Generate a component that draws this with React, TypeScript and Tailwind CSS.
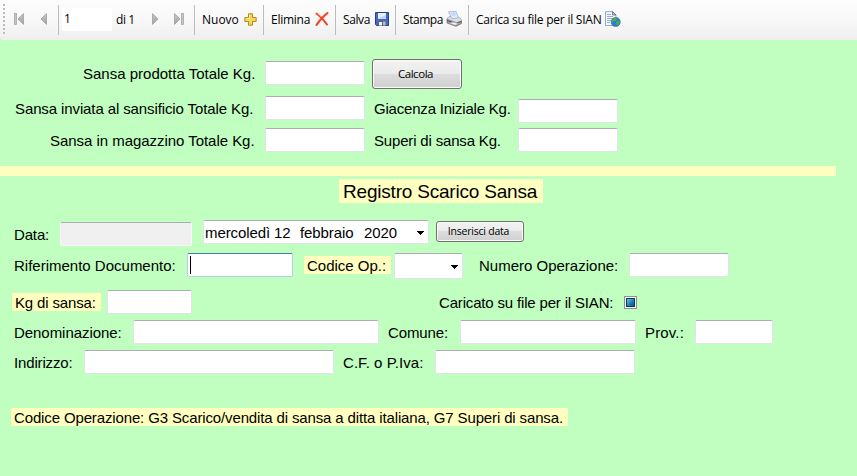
import type { ReactNode } from "react";

function Field({ className = "" }: { className?: string }) {
  return (
    <div className={`h-6 shrink-0 rounded-[2px] border border-[#e2e3ea] border-t-[#abadb3] bg-white ${className}`} />
  );
}

function Label({ className = "", children }: { className?: string; children: ReactNode }) {
  return (
    <span className={`h-[17px] shrink-0 whitespace-pre text-[15px] leading-[17px] text-black ${className}`}>
      {children}
    </span>
  );
}

function Row({ className = "", children }: { className?: string; children: ReactNode }) {
  return <div className={`flex shrink-0 items-start ${className}`}>{children}</div>;
}

function Separator({ className = "" }: { className?: string }) {
  return <div className={`mt-[5px] h-[30px] w-px shrink-0 bg-[#bdbdbd] ${className}`} />;
}

function ToolText({ className = "", children }: { className?: string; children: ReactNode }) {
  return (
    <span
      className={`mt-3 h-4 shrink-0 whitespace-pre font-['Open_Sans','Noto_Sans',sans-serif] text-[12px] leading-4 text-black ${className}`}
    >
      {children}
    </span>
  );
}

function Arrow({ flip = false, bar = false, className = "" }: { flip?: boolean; bar?: boolean; className?: string }) {
  return (
    <svg viewBox="0 0 12 12" className={`mt-[13px] h-3 w-3 shrink-0 ${flip ? "-scale-x-100" : ""} ${className}`}>
      <defs>
        <linearGradient id="arrowFill" x1="0" y1="0" x2="0" y2="1">
          <stop offset="0" stopColor="#c9c9c9" />
          <stop offset="1" stopColor="#a2a2a2" />
        </linearGradient>
      </defs>
      {bar && <rect x="1.5" y="0.5" width="2" height="11" fill="#c4c4c4" stroke="#a6a6a6" strokeWidth="0.8" />}
      <path d="M10.500 0.600V11.400L5 6Z" fill="url(#arrowFill)" stroke="#a0a0a0" strokeWidth="0.800" />
    </svg>
  );
}

function PlusIcon() {
  return (
    <svg viewBox="0 0 13 13" className="ml-[6px] mt-[13px] h-[13px] w-[13px] shrink-0">
      <path d="M4.500 0.800h4v3.700h3.700v4H8.500v3.700h-4V8.500H0.800v-4h3.700z" fill="#f8d458" stroke="#b48a1c" strokeLinejoin="round" />
      <path d="M5.500 2v3.500H2" fill="none" stroke="#fdf0a8" />
    </svg>
  );
}

function CrossIcon() {
  return (
    <svg viewBox="0 0 14 14" className="ml-[5px] mt-3 h-[14px] w-[14px] shrink-0">
      <path d="M1.500 1.500C5 4 9 8 12 12.500M12.500 1C8 4.500 4.500 8 1.500 13" fill="none" stroke="#ee4422" strokeWidth="2" strokeLinecap="round" />
      <path d="M2 1.500L6 5" stroke="#f88068" strokeWidth="1" />
    </svg>
  );
}

function DiskIcon() {
  return (
    <svg viewBox="0 0 14 14" className="ml-[5px] mt-3 h-[14px] w-[14px] shrink-0">
      <path d="M0.500 0.500h13v13h-12l-1-1z" fill="#4468c4" stroke="#263f96" />
      <rect x="3" y="1" width="8" height="6" fill="#e8f0fa" />
      <path d="M3 6.500L11 3v4H3z" fill="#c2d4ee" />
      <rect x="3" y="9" width="8" height="4.500" fill="#5a6274" />
      <rect x="4" y="10" width="3" height="3.500" fill="#f2f2f2" />
      <rect x="8" y="9.500" width="2.500" height="4" fill="#b8bec8" />
    </svg>
  );
}

function PrinterIcon() {
  return (
    <svg viewBox="0 0 16 16" className="ml-[3px] mr-px mt-[11px] h-4 w-4 shrink-0">
      <path d="M1 7.500L4 5.500l10 1.500 1.500 2.500v3L10 15.300 1 12z" fill="#a0a0a0" stroke="#666666" strokeWidth="0.700" />
      <path d="M1 7.500L4 5.500l10 1.500 1.500 2.500-5 1.800z" fill="#dedede" />
      <path d="M2.500 0.800L10 0.400l2.500 6.400L6 8z" fill="#dcecff" stroke="#89a9d8" strokeWidth="0.700" />
      <path d="M5 2.500l4.500-.4M5.600 4.200l4.600-.5" stroke="#a4c2ea" strokeWidth="0.700" />
      <path d="M1.200 9.500l9 3 5-2" stroke="#444444" fill="none" strokeWidth="0.900" />
      <path d="M3 12l6 2.300 4-1.500-6-1.800z" fill="#f4f4f4" stroke="#888888" strokeWidth="0.500" />
      <path d="M12 11.300h1.500" stroke="#68a858" />
    </svg>
  );
}

function PageGlobeIcon() {
  return (
    <svg viewBox="0 0 17 16" className="ml-[3px] mt-[11px] h-4 w-[17px] shrink-0">
      <path d="M1.500 0.600h7L12 4v10.500H1.500z" fill="#f5f9ff" stroke="#8094b8" strokeWidth="0.800" />
      <path d="M8.500 0.600V4H12z" fill="#b8cbea" stroke="#3c5888" strokeWidth="0.700" />
      <path d="M3 3.500h4M3 5.500h6M3 7.500h6M3 9.500h4M3 11.500h3" stroke="#8a9fc2" strokeWidth="0.900" />
      <circle cx="11.700" cy="11" r="4.600" fill="#2d7dcc" stroke="#25589c" strokeWidth="0.500" />
      <path d="M8 8.500l3-1.800 2 .8-1 2-2.500 1.200-1.800.300zM12 11l3-1.500.8 2-2 3.300-1.600-1.500z" fill="#4cae48" />
    </svg>
  );
}

function DropArrow({ className = "" }: { className?: string }) {
  return (
    <svg viewBox="0 0 7 4" shapeRendering="crispEdges" className={`h-1 w-[7px] shrink-0 ${className}`}>
      <path d="M0 0h7v1H0zM1 1h5v1H1zM2 2h3v1H2zM3 3h1v1H3z" fill="#000" />
    </svg>
  );
}

function Button({ className = "", children }: { className?: string; children: ReactNode }) {
  return (
    <button
      className={`flex shrink-0 items-center justify-center whitespace-pre rounded-[3px] border border-[#707070] bg-[linear-gradient(#f2f2f2,#ebebeb_48%,#dddddd_50%,#cfcfcf)] font-['Open_Sans','Noto_Sans',sans-serif] text-black shadow-[inset_0_0_0_1px_#fafafa] ${className}`}
    >
      {children}
    </button>
  );
}

function Toolbar() {
  return (
    <div className="flex h-10 shrink-0 items-start rounded-bl-[4px] bg-[linear-gradient(#fcfcfc,#f8f8f8_50%,#efefef)]">
      <div className="ml-[3px] mt-1 h-[31px] w-[2px] shrink-0 bg-[repeating-linear-gradient(#bcbcbc_0_2px,transparent_2px_4px)]" />
      <Arrow bar className="ml-2" />
      <Arrow className="ml-[11px]" />
      <Separator className="ml-[10px]" />
      <div className="ml-[3px] mt-2 flex h-[23px] w-[50px] shrink-0 bg-white pl-[2px]">
        <ToolText className="mt-[3px]!">1</ToolText>
      </div>
      <ToolText className="ml-1 w-[26px] tracking-[-0.4px]">di 1</ToolText>
      <Arrow flip className="ml-[9px]" />
      <Arrow flip bar className="ml-[10px]" />
      <Separator className="ml-[9px]" />
      <ToolText className="ml-[7px] w-9">Nuovo</ToolText>
      <PlusIcon />
      <Separator className="ml-[6px]" />
      <ToolText className="ml-[7px] w-[39px] tracking-[-0.25px]">Elimina</ToolText>
      <CrossIcon />
      <Separator className="ml-[6px]" />
      <ToolText className="ml-[7px] w-[27px] tracking-[-0.4px]">Salva</ToolText>
      <DiskIcon />
      <Separator className="ml-[6px]" />
      <ToolText className="ml-[7px] w-10 tracking-[-0.45px]">Stampa</ToolText>
      <PrinterIcon />
      <Separator className="ml-[5px]" />
      <ToolText className="ml-[7px] w-[125px] tracking-[-0.24px]">Carica su file per il SIAN</ToolText>
      <PageGlobeIcon />
    </div>
  );
}

export default function App() {
  return (
    <div className="flex h-[476px] w-[857px] flex-col overflow-hidden bg-[#c0ffc0] font-['Liberation_Sans',Arial,sans-serif]">
      <Toolbar />

      <Row className="mt-[19px] h-[37px]">
        <Label className="ml-[83px] mt-[6px] w-[182px]">Sansa prodotta Totale Kg.</Label>
        <Field className="mt-[2px] w-[100px]" />
        <Button className="ml-[7px] h-[30px] w-[90px] pr-[3px] text-[11.500px] tracking-[-0.45px]">Calcola</Button>
      </Row>
      <Row className="h-8">
        <Label className="ml-[15px] mt-1 w-[250px] tracking-[-0.11px]">Sansa inviata al sansificio Totale Kg.</Label>
        <Field className="w-[100px]" />
        <Label className="ml-[9px] mt-1 w-[144px] tracking-[-0.2px]">Giacenza Iniziale Kg.</Label>
        <Field className="mt-[3px] w-[100px]" />
      </Row>
      <Row className="h-[38px]">
        <Label className="ml-[50px] mt-1 w-[215px] tracking-[-0.04px]">Sansa in magazzino Totale Kg.</Label>
        <Field className="w-[100px]" />
        <Label className="ml-[9px] mt-1 w-[144px] tracking-[-0.17px]">Superi di sansa Kg.</Label>
        <Field className="w-[100px]" />
      </Row>

      <div className="h-[10px] w-[836px] shrink-0 bg-[#ffffc0]" />

      <div className="ml-[339px] mt-[3px] h-6 w-[204px] shrink-0 whitespace-pre bg-[#ffffc0] pl-1 text-[19px] leading-[25px] tracking-[-0.2px] text-black">
        Registro Scarico Sansa
      </div>

      <Row className="mt-[17px] h-[33px]">
        <Label className="ml-[14px] mt-[6px] w-[46px] tracking-[-0.15px]">Data:</Label>
        <Field className="mt-[2px] w-[132px] border-[#f7f7f9]! border-t-[#abadb3]! bg-[#f0f0f0]!" />
        <div className="ml-[11px] flex h-6 w-[226px] shrink-0 items-start rounded-[2px] border border-[#e2e3ea] border-t-[#abadb3] bg-white">
          <Label className="ml-px mt-[3px] w-[95px] tracking-[-0.1px]">mercoledì 12</Label>
          <Label className="mt-[3px] w-16 tracking-[-0.1px]">febbraio</Label>
          <Label className="mt-[3px] w-[53px] tracking-[-0.1px]">2020</Label>
          <DropArrow className="mt-[10px]" />
        </div>
        <Button className="ml-[7px] mt-px h-[21px] w-[88px] pb-0 pr-[3px] text-[10.500px] tracking-[-0.22px]">
          Inserisci data
        </Button>
      </Row>
      <Row className="h-[37px]">
        <Label className="ml-[14px] mt-1 w-[173px]">Riferimento Documento:</Label>
        <Field className="w-[106px] border-[#b5cfe7]! border-t-[#3d7bad]! pl-[2px] pt-[2px] before:block before:h-[18px] before:w-px before:bg-black" />
        <Label className="ml-[11px] mt-[3px] h-[18px]! w-[87px] bg-[#ffffc0] pl-[3px] pt-px">Codice Op.:</Label>
        <div className="ml-[3px] flex h-[26px] w-[69px] shrink-0 items-start rounded-[2px] border border-[#e2e3ea] border-t-[#abadb3] bg-white">
          <DropArrow className="ml-14 mt-[11px]" />
        </div>
        <Label className="ml-4 mt-1 w-[150px]">Numero Operazione:</Label>
        <Field className="w-[100px]" />
      </Row>
      <Row className="h-[30px]">
        <Label className="ml-3 mt-[3px] h-[18px]! w-[89px] bg-[#ffffc0] pl-[3px] pt-px tracking-[-0.15px]">Kg di sansa:</Label>
        <Field className="ml-[6px] w-[85px]" />
        <Label className="ml-[247px] mt-1 w-[185px] tracking-[-0.17px]">Caricato su file per il SIAN:</Label>
        <div className="mt-[6px] flex h-[13px] w-[13px] shrink-0 items-center justify-center border border-[#8e8f8f] bg-[#f4f4f4]">
          <div className="h-[9px] w-[9px] border border-[#16385c] bg-[linear-gradient(135deg,#5cc8ee,#1d82b8_55%,#12537e)]" />
        </div>
      </Row>
      <Row className="h-[30px]">
        <Label className="ml-[14px] mt-1 w-[119px] tracking-[-0.05px]">Denominazione:</Label>
        <Field className="w-[246px]" />
        <Label className="ml-[9px] mt-1 w-[72px] tracking-[-0.1px]">Comune:</Label>
        <Field className="w-[176px]" />
        <Label className="ml-[9px] mt-1 w-[50px] tracking-[0.15px]">Prov.:</Label>
        <Field className="w-[78px]" />
      </Row>
      <Row className="h-[58px]">
        <Label className="ml-[14px] mt-1 w-[70px] tracking-[-0.15px]">Indirizzo:</Label>
        <Field className="w-[250px]" />
        <Label className="ml-[9px] mt-1 w-[92px] tracking-[0.05px]">C.F. o P.Iva:</Label>
        <Field className="w-[200px]" />
      </Row>
      <Row className="h-[18px]">
        <Label className="ml-[11px] h-[18px]! w-[557px] bg-[#ffffc0] pl-[3px] pt-px tracking-[-0.135px]">
          Codice Operazione: G3 Scarico/vendita di sansa a ditta italiana, G7 Superi di sansa.
        </Label>
      </Row>
    </div>
  );
}
